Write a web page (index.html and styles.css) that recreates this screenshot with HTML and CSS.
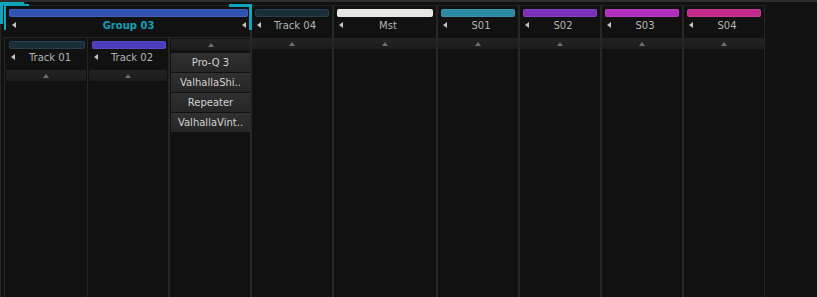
FILE: index.html
```html
<!DOCTYPE html>
<html lang="en">
<head>
    <meta charset="UTF-8">
    <title>Mixer</title>
    <link rel="stylesheet" href="styles.css">
</head>
<body>
    <div class="mixer">
        <!-- Group folder -->
        <div class="strip group">
            <span class="corner corner-outer"></span>
            <span class="corner corner-inner"></span>
            <span class="corner corner-right"></span>
            <div class="head">
                <div class="color" style="background:#2f52b4"></div>
                <div class="name">
                    <span class="arrow"></span>
                    <span class="label">Group 03</span>
                    <span class="arrow"></span>
                </div>
            </div>
            <div class="children">
                <div class="strip child first">
                    <div class="head">
                        <div class="color dark" style="background:#1a2e35"></div>
                        <div class="name"><span class="arrow"></span><span class="label">Track 01</span></div>
                    </div>
                    <div class="up"></div>
                </div>
                <div class="strip child">
                    <div class="head">
                        <div class="color" style="background:#4b3cbf"></div>
                        <div class="name"><span class="arrow"></span><span class="label">Track 02</span></div>
                    </div>
                    <div class="up"></div>
                </div>
                <div class="fx">
                    <div class="up"></div>
                    <div class="plugins">
                        <div class="plugin">Pro-Q 3</div>
                        <div class="plugin">ValhallaShi..</div>
                        <div class="plugin">Repeater</div>
                        <div class="plugin">ValhallaVint..</div>
                    </div>
                </div>
            </div>
        </div>

        <!-- Top level tracks -->
        <div class="strip">
            <div class="head">
                <div class="color dark" style="background:#1a2e35"></div>
                <div class="name"><span class="arrow"></span><span class="label">Track 04</span></div>
            </div>
            <div class="up"></div>
        </div>
        <div class="strip master">
            <div class="head">
                <div class="color" style="background:#e6e6e2"></div>
                <div class="name"><span class="arrow"></span><span class="label">Mst</span></div>
            </div>
            <div class="up"></div>
        </div>
        <div class="strip">
            <div class="head">
                <div class="color" style="background:#2a8aa1"></div>
                <div class="name"><span class="arrow"></span><span class="label">S01</span></div>
            </div>
            <div class="up"></div>
        </div>
        <div class="strip">
            <div class="head">
                <div class="color" style="background:#7a30b9"></div>
                <div class="name"><span class="arrow"></span><span class="label">S02</span></div>
            </div>
            <div class="up"></div>
        </div>
        <div class="strip">
            <div class="head">
                <div class="color" style="background:#b22cc0"></div>
                <div class="name"><span class="arrow"></span><span class="label">S03</span></div>
            </div>
            <div class="up"></div>
        </div>
        <div class="strip">
            <div class="head">
                <div class="color" style="background:#c12a8a"></div>
                <div class="name"><span class="arrow"></span><span class="label">S04</span></div>
            </div>
            <div class="up"></div>
        </div>
    </div>
</body>
</html>
```

FILE: styles.css
```css
* {
    box-sizing: border-box;
}

body {
    margin: 0;
    background: #111111;
    font-family: "DejaVu Sans", sans-serif;
    font-size: 10px;
    color: #b4b4b4;
    overflow: hidden;
}

/* Mixer row */
.mixer {
    display: flex;
    align-items: stretch;
    height: 297px;
    border-top: 2px solid #2c2c2c;
    padding-top: 3px;
}

/* Channel strips */
.strip {
    display: flex;
    flex-direction: column;
    width: 82px;
    border-left: 1px solid #262626;
    border-right: 1px solid #262626;
    border-top: 1px solid #1f1f1f;
}

.strip.master {
    width: 104px;
}

.head {
    padding: 3px 3px 0 3px;
}

.color {
    height: 8px;
    border-radius: 2px;
    border: 1px solid rgba(255, 255, 255, 0.08);
}

.color.dark {
    border-color: #24404a;
}

.name {
    display: flex;
    align-items: center;
    height: 16px;
}

.label {
    flex: 1;
    text-align: center;
    white-space: nowrap;
}

.arrow {
    width: 0;
    height: 0;
    margin-left: 2px;
    border-top: 3px solid transparent;
    border-bottom: 3px solid transparent;
    border-right: 4px solid #c2c2c2;
}

/* Scroll-up button */
.up {
    position: relative;
    height: 11px;
    margin-top: 5px;
    background: linear-gradient(#232323, #1c1c1c);
}

.up::after {
    content: "";
    position: absolute;
    left: 50%;
    top: 4px;
    margin-left: -3px;
    border-left: 3px solid transparent;
    border-right: 3px solid transparent;
    border-bottom: 4px solid #6e6e6e;
}

/* Group folder */
.group {
    position: relative;
    width: 251px;
}

.group > .head {
    padding: 3px 2px 0 8px;
}

.group > .head .arrow {
    margin-left: 3px;
    margin-right: 2px;
}

.group > .head .label {
    color: #10a1b8;
    font-weight: bold;
}

.corner {
    position: absolute;
    border-color: #0ea6bc;
    border-style: solid;
    border-width: 0;
}

.corner-outer {
    left: -1px;
    top: -4px;
    width: 24px;
    height: 22px;
    border-top-width: 3px;
    border-left-width: 3px;
}

.corner-inner {
    left: 3px;
    top: -2px;
    width: 25px;
    height: 26px;
    border-top-width: 2px;
    border-left-width: 2px;
}

.corner-right {
    right: -2px;
    top: -2px;
    width: 23px;
    height: 26px;
    border-top-width: 3px;
    border-right-width: 3px;
}

.children {
    flex: 1;
    display: flex;
    margin: 4px 0 0 3px;
}

.child {
    border-top-color: #262626;
}

.child.first {
    width: 83px;
    border-right: none;
}

.child .head {
    padding: 3px 2px 0 4px;
}

.child .up {
    margin: 5px 1px 0 1px;
}

/* Effects column */
.fx {
    width: 81px;
    border-left: 1px solid #262626;
    border-top: 1px solid #262626;
    padding: 1px 0 0 1px;
}

.fx .up {
    margin-top: 0;
}

.plugins {
    margin-top: 3px;
}

.plugin {
    height: 19px;
    line-height: 19px;
    margin-bottom: 1px;
    text-align: center;
    color: #d2d2d2;
    background: linear-gradient(#303030, #262626);
    white-space: nowrap;
    overflow: hidden;
}
```
